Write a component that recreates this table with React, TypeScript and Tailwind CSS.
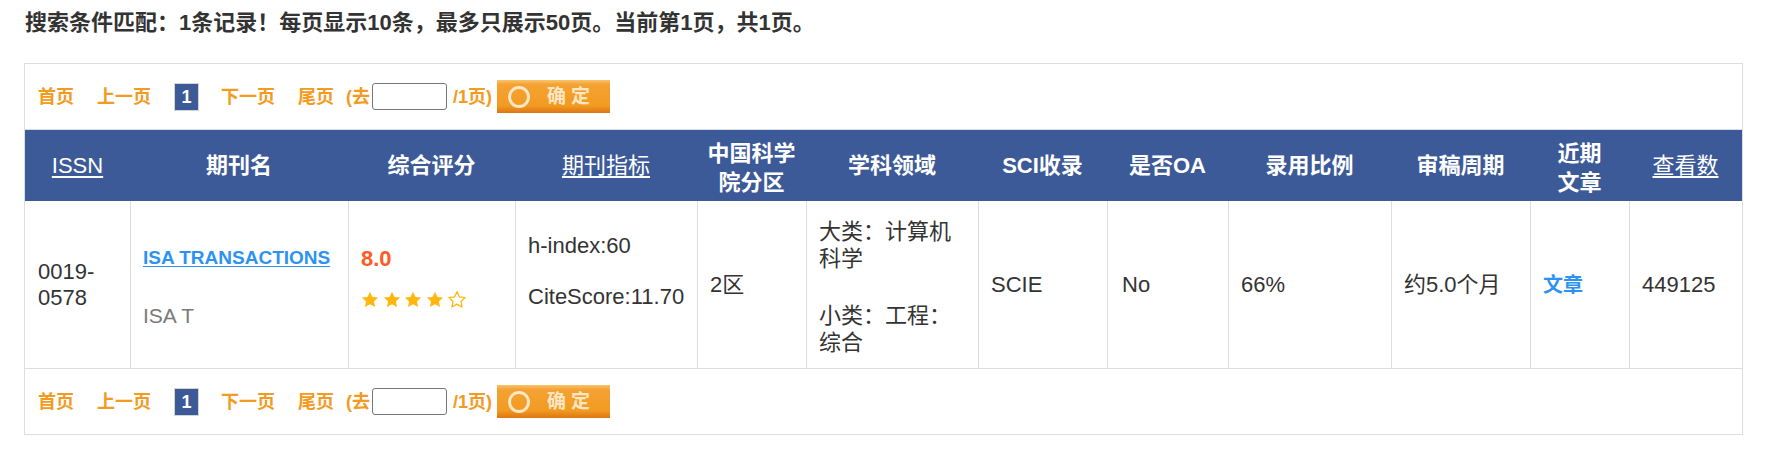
import React from "react";

const COLS =
  "grid grid-cols-[105px_218px_167px_182px_109px_172px_129px_121px_163px_139px_99px_113px]";

function Star({ filled }: { filled: boolean }) {
  return (
    <svg width="18" height="17" viewBox="0 0 24 23" className="block">
      <path
        d="M12 1l3.3 7 7.7.9-5.7 5.2 1.6 7.6L12 17.8l-6.9 3.9 1.6-7.6L1 8.9 8.7 8z"
        fill={filled ? "#ffb60f" : "none"}
        stroke="#ffb60f"
        strokeWidth={filled ? 0 : 1.7}
        strokeLinejoin="round"
      />
    </svg>
  );
}

function Pager() {
  return (
    <div className="flex h-[65px] items-center pl-[13px] text-[18px] font-bold leading-[22px] text-[#f39a21]">
      <span>首页</span>
      <span className="ml-[23px]">上一页</span>
      <span className="ml-[23px] flex h-[28px] w-[25px] items-center justify-center border border-[#d4d4d4] bg-[#3d5a98] text-white">
        1
      </span>
      <span className="ml-[22px]">下一页</span>
      <span className="ml-[23px]">尾页</span>
      <span className="ml-[12px]">(去</span>
      <input
        type="text"
        className="ml-[2px] h-[27px] w-[75px] rounded-[3px] border border-[#767676] bg-white outline-none"
      />
      <span className="ml-[6px]">/1页)</span>
      <button
        type="button"
        className="ml-[5px] flex h-[33px] w-[113px] items-center bg-[linear-gradient(to_bottom,#f8c46a_0%,#f4a233_14%,#f29b22_78%,#dd7414_100%)] pl-[11px]"
      >
        <span className="h-[22px] w-[22px] rounded-full border-[3px] border-[#fde6c4]" />
        <span className="ml-[17px] flex gap-[5px] text-[19px] font-bold text-[#fde6c4]">
          <span>确</span>
          <span>定</span>
        </span>
      </button>
    </div>
  );
}

export default function App() {
  const th =
    "flex items-center justify-center text-center text-white text-[22px] leading-[26px]";
  const td =
    "flex items-center border-l border-[#dddddd] px-[12px] text-[22px] leading-[26px] text-[#333333]";
  return (
    <div className="min-h-[464px] w-[1769px] bg-white font-['Liberation_Sans','Noto_Sans_CJK_SC',sans-serif] text-[#333333]">
      <div className="pl-[25px] pt-[10px] text-[22px] font-bold leading-[26px] text-[#333333]">
        搜索条件匹配：1条记录！每页显示10条，最多只展示50页。当前第1页，共1页。
      </div>
      <div className="ml-[24px] mt-[27px] w-[1719px] border border-[#dddddd]">
        <Pager />
        <div className="border-t border-[#dddddd]">
          <div className={`${COLS} h-[71px] bg-[#3d5a98]`}>
            <div className={th}>
              <span className="underline underline-offset-[3px]">ISSN</span>
            </div>
            <div className={`${th} font-bold`}>期刊名</div>
            <div className={`${th} font-bold`}>综合评分</div>
            <div className={th}>
              <span className="underline underline-offset-[3px]">期刊指标</span>
            </div>
            <div className={`${th} font-bold font-['Noto_Sans_CJK_SC',sans-serif] leading-[29px]`}>
              中国科学
              <br />
              院分区
            </div>
            <div className={`${th} font-bold`}>学科领域</div>
            <div className={`${th} font-bold`}>SCI收录</div>
            <div className={`${th} font-bold`}>是否OA</div>
            <div className={`${th} font-bold`}>录用比例</div>
            <div className={`${th} font-bold`}>审稿周期</div>
            <div className={`${th} font-bold font-['Noto_Sans_CJK_SC',sans-serif] leading-[29px]`}>
              近期
              <br />
              文章
            </div>
            <div className={th}>
              <span className="underline underline-offset-[3px]">查看数</span>
            </div>
          </div>
          <div className={`${COLS} h-[168px] border-b border-[#dddddd]`}>
            <div className="flex items-center px-[13px] text-[22px] leading-[26px] text-[#333333]">
              <span>
                0019-
                <br />
                0578
              </span>
            </div>
            <div className={`${td} flex-col !items-start justify-center gap-[32px] pt-[5px]`}>
              <span className="text-[19px] font-bold text-[#2d93f2] underline underline-offset-[2px]">
                ISA TRANSACTIONS
              </span>
              <span className="text-[21px] text-[#7a7a7a]">ISA T</span>
            </div>
            <div className={`${td} flex-col !items-start justify-center pb-[15px]`}>
              <span className="font-bold text-[#ff5a24]">8.0</span>
              <div className="mt-[19px] flex gap-[3.7px]">
                <Star filled />
                <Star filled />
                <Star filled />
                <Star filled />
                <Star filled={false} />
              </div>
            </div>
            <div className={`${td} flex-col !items-start justify-center gap-[25px] pb-[27px]`}>
              <span>h-index:60</span>
              <span>CiteScore:11.70</span>
            </div>
            <div className={td}>2区</div>
            <div
              className={`${td} flex-col !items-start justify-center gap-[30px] font-['Noto_Sans_CJK_SC',sans-serif] !leading-[27px]`}
            >
              <span>大类：计算机科学</span>
              <span>小类：工程：综合</span>
            </div>
            <div className={td}>SCIE</div>
            <div className={`${td} pl-[14px]`}>No</div>
            <div className={td}>66%</div>
            <div className={td}>约5.0个月</div>
            <div className={td}>
              <span className="text-[20px] font-bold text-[#2d93f2]">文章</span>
            </div>
            <div className={td}>449125</div>
          </div>
        </div>
        <Pager />
      </div>
    </div>
  );
}
